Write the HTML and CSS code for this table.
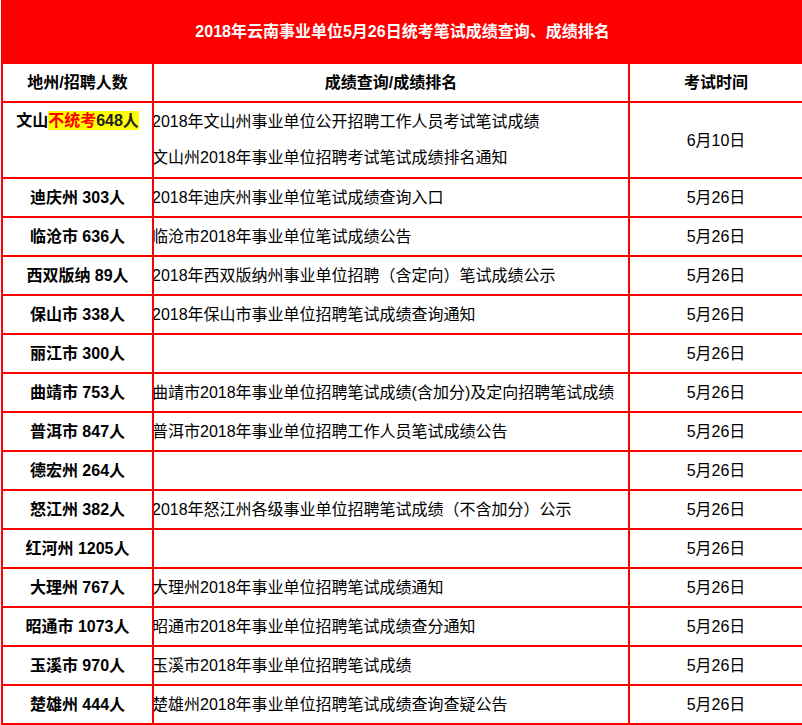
FILE: index.html
```html
<!DOCTYPE html>
<html lang="zh-CN">
<head>
<meta charset="utf-8">
<title>2018年云南事业单位5月26日统考笔试成绩查询、成绩排名</title>
<link rel="stylesheet" href="styles.css">
</head>
<body>
<table class="score-table">
  <colgroup>
    <col class="c1">
    <col class="c2">
    <col class="c3">
  </colgroup>
  <tr class="title-row"><td colspan="3">2018年云南事业单位5月26日统考笔试成绩查询、成绩排名</td></tr>
  <tr class="head-row"><td>地州/招聘人数</td><td class="mid">成绩查询/成绩排名</td><td>考试时间</td></tr>
  <tr class="first-row">
    <td class="region top">文山<span class="hl"><span class="red">不统考</span>648人</span></td>
    <td class="links"><div class="line">2018年文山州事业单位公开招聘工作人员考试笔试成绩</div><div class="line">文山州2018年事业单位招聘考试笔试成绩排名通知</div></td>
    <td class="date">6月10日</td>
  </tr>
  <tr><td class="region">迪庆州 303人</td><td class="links">2018年迪庆州事业单位笔试成绩查询入口</td><td class="date">5月26日</td></tr>
  <tr><td class="region">临沧市 636人</td><td class="links">临沧市2018年事业单位笔试成绩公告</td><td class="date">5月26日</td></tr>
  <tr><td class="region">西双版纳 89人</td><td class="links">2018年西双版纳州事业单位招聘（含定向）笔试成绩公示</td><td class="date">5月26日</td></tr>
  <tr><td class="region">保山市 338人</td><td class="links">2018年保山市事业单位招聘笔试成绩查询通知</td><td class="date">5月26日</td></tr>
  <tr><td class="region">丽江市 300人</td><td class="links"></td><td class="date">5月26日</td></tr>
  <tr><td class="region">曲靖市 753人</td><td class="links">曲靖市2018年事业单位招聘笔试成绩(含加分)及定向招聘笔试成绩</td><td class="date">5月26日</td></tr>
  <tr><td class="region">普洱市 847人</td><td class="links">普洱市2018年事业单位招聘工作人员笔试成绩公告</td><td class="date">5月26日</td></tr>
  <tr><td class="region">德宏州 264人</td><td class="links"></td><td class="date">5月26日</td></tr>
  <tr><td class="region">怒江州 382人</td><td class="links">2018年怒江州各级事业单位招聘笔试成绩（不含加分）公示</td><td class="date">5月26日</td></tr>
  <tr><td class="region">红河州 1205人</td><td class="links"></td><td class="date">5月26日</td></tr>
  <tr><td class="region">大理州 767人</td><td class="links">大理州2018年事业单位招聘笔试成绩通知</td><td class="date">5月26日</td></tr>
  <tr><td class="region">昭通市 1073人</td><td class="links">昭通市2018年事业单位招聘笔试成绩查分通知</td><td class="date">5月26日</td></tr>
  <tr><td class="region">玉溪市 970人</td><td class="links">玉溪市2018年事业单位招聘笔试成绩</td><td class="date">5月26日</td></tr>
  <tr><td class="region">楚雄州 444人</td><td class="links">楚雄州2018年事业单位招聘笔试成绩查询查疑公告</td><td class="date">5月26日</td></tr>
</table>
</body>
</html>
```

FILE: styles.css
```css
html, body {
  margin: 0;
  padding: 0;
  background: #fff;
}
body {
  padding-left: 1px;
  font-family: "Liberation Sans", "Noto Sans CJK SC", sans-serif;
  font-size: 16px;
  color: #000;
}
.score-table {
  border-collapse: collapse;
  table-layout: fixed;
  width: 801px;
}
.c1 { width: 151px; }
.c2 { width: 476px; }
.c3 { width: 174px; }
.score-table td {
  border: 2px solid #f00;
  padding: 0;
  line-height: 37px;
  height: 37px;
  vertical-align: middle;
  white-space: nowrap;
  overflow: hidden;
}
.title-row td {
  background: #f00;
  color: #fff;
  font-weight: bold;
  text-align: center;
  line-height: 60px;
  height: 60px;
}
.head-row td {
  font-weight: bold;
  text-align: center;
}
.region {
  font-weight: bold;
  text-align: center;
}
.region.top {
  vertical-align: top;
  line-height: 36px;
}
.hl {
  display: inline-block;
  background: #ff0;
  line-height: 19px;
  vertical-align: 0;
  color: #222;
}
.red {
  color: #f00;
}
.links {
  text-align: left;
  text-indent: -2px;
}
.first-row td {
  height: 73px;
}
.line {
  line-height: 36px;
}
.first-row .links {
  padding-bottom: 1px;
}
.date {
  text-align: center;
}
```
